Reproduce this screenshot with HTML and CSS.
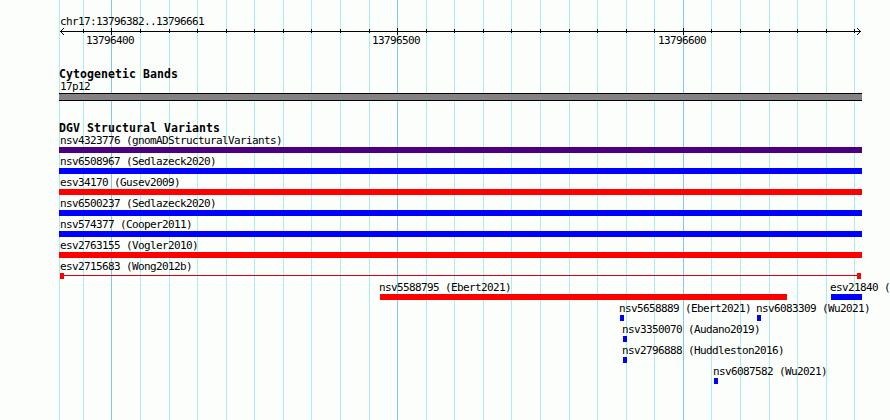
FILE: index.html
```
<!DOCTYPE html>
<html lang="en">
<head>
  <meta charset="UTF-8">
  <title>chr17:13796382..13796661</title>
  <link rel="stylesheet" href="styles.css">
</head>
<body>
  <div class="panel">
    <svg class="grid" width="890" height="420" shape-rendering="crispEdges">
      <path class="minor" d="M59.5 0V420M83.5 0V420M140.5 0V420M169.5 0V420M197.5 0V420M226.5 0V420M254.5 0V420M283.5 0V420M311.5 0V420M340.5 0V420M369.5 0V420M426.5 0V420M454.5 0V420M483.5 0V420M511.5 0V420M540.5 0V420M569.5 0V420M597.5 0V420M626.5 0V420M654.5 0V420M711.5 0V420M740.5 0V420M769.5 0V420M797.5 0V420M826.5 0V420M854.5 0V420"/>
      <path class="major" d="M111.5 0V420M397.5 0V420M683.5 0V420"/>
    </svg>

    <div class="tracks">
      <div class="label region">chr17:13796382..13796661</div>
      <svg class="ruler" width="803" height="7" viewBox="59 28 803 7" shape-rendering="crispEdges">
        <path d="M60 31.5H861"/>
        <path d="M83.5 29V33M140.5 29V33M169.5 29V33M197.5 29V33M226.5 29V33M254.5 29V33M283.5 29V33M311.5 29V33M340.5 29V33M369.5 29V33M426.5 29V33M454.5 29V33M483.5 29V33M511.5 29V33M540.5 29V33M569.5 29V33M597.5 29V33M626.5 29V33M654.5 29V33M711.5 29V33M740.5 29V33M769.5 29V33M797.5 29V33M826.5 29V33M854.5 29V33"/>
        <path d="M111.5 28V35M397.5 28V35M683.5 28V35"/>
        <path d="M61 30.5h1M62 29.5h1M63 28.5h1M61 32.5h1M62 33.5h1M63 34.5h1M859 30.5h1M858 29.5h1M857 28.5h1M859 32.5h1M858 33.5h1M857 34.5h1"/>
      </svg>
      <div class="numbers">
        <span class="label">13796400</span>
        <span class="label">13796500</span>
        <span class="label">13796600</span>
      </div>

      <h2 class="bands-title">Cytogenetic Bands</h2>
      <div class="label band-label">17p12</div>
      <div class="band"></div>

      <h2 class="variants-title">DGV Structural Variants</h2>
      <div class="row"><div class="feature full gain-loss"><span class="label">nsv4323776 (gnomADStructuralVariants)</span></div></div>
      <div class="row"><div class="feature full gain"><span class="label">nsv6508967 (Sedlazeck2020)</span></div></div>
      <div class="row"><div class="feature full loss"><span class="label">esv34170 (Gusev2009)</span></div></div>
      <div class="row"><div class="feature full gain"><span class="label">nsv6500237 (Sedlazeck2020)</span></div></div>
      <div class="row"><div class="feature full gain"><span class="label">nsv574377 (Cooper2011)</span></div></div>
      <div class="row"><div class="feature full loss"><span class="label">esv2763155 (Vogler2010)</span></div></div>
      <div class="row"><div class="feature full ends"><span class="label">esv2715683 (Wong2012b)</span></div></div>
      <div class="row">
        <div class="feature loss" style="margin-left: 321px; width: 407px"><span class="label">nsv5588795 (Ebert2021)</span></div>
        <div class="feature gain" style="margin-left: 44px; width: 31px"><span class="label">esv21840 (</span></div>
      </div>
      <div class="row">
        <div class="feature gain" style="margin-left: 561px; width: 4px"><span class="label">nsv5658889 (Ebert2021)</span></div>
        <div class="feature gain" style="margin-left: 133px; width: 4px"><span class="label">nsv6083309 (Wu2021)</span></div>
      </div>
      <div class="row"><div class="feature gain" style="margin-left: 564px; width: 4px"><span class="label">nsv3350070 (Audano2019)</span></div></div>
      <div class="row"><div class="feature gain" style="margin-left: 564px; width: 4px"><span class="label">nsv2796888 (Huddleston2016)</span></div></div>
      <div class="row"><div class="feature gain" style="margin-left: 655px; width: 4px"><span class="label">nsv6087582 (Wu2021)</span></div></div>
    </div>
  </div>
</body>
</html>
```
FILE: styles.css
```
body {
  margin: 0;
  background: #fcfefc;
}
.panel {
  position: relative;
  width: 890px;
  height: 420px;
  overflow: hidden;
  color: #000;
  font-family: "DejaVu Sans Mono", monospace;
}
.grid {
  position: absolute;
  top: 0;
  left: 0;
}
.minor {
  stroke: #aceeec;
}
.major {
  stroke: #84cae4;
}
.tracks {
  position: relative;
  width: 803px;
  padding: 16px 0 0 59px;
}
.label {
  display: block;
  font-size: 11px;
  line-height: 12px;
  letter-spacing: -0.622px;
  white-space: nowrap;
}
.region {
  height: 12px;
  padding-left: 1px;
}
.ruler {
  display: block;
  stroke: #000;
}
.numbers {
  display: flex;
  gap: 238px;
  height: 33px;
  padding-left: 27px;
}
.numbers .label {
  width: 48px;
  line-height: 11px;
}
h2 {
  margin: 0;
  font-size: 11.5px;
  line-height: 10px;
  letter-spacing: 0.077px;
}
.bands-title {
  height: 12px;
  padding-top: 1px;
}
.band-label {
  height: 12px;
  padding-left: 1px;
}
.band {
  height: 6px;
  border: solid #000;
  border-width: 1px 0;
  background: #848284;
}
.variants-title {
  height: 11px;
  margin-top: 22px;
}
.row {
  display: flex;
  height: 21px;
}
.feature {
  height: 6px;
  padding-top: 13px;
  background-repeat: no-repeat;
  background-position: 0 13px;
  background-size: 100% 6px;
}
.feature .label {
  height: 12px;
  margin: -12px 0 0 -1px;
}
.full {
  width: 803px;
}
.full .label {
  padding-left: 2px;
}
.gain {
  background-image: linear-gradient(#00f, #00f);
}
.loss {
  background-image: linear-gradient(#f00, #f00);
}
.gain-loss {
  background-image: linear-gradient(#4b0082, #4b0082);
}
/* two breakpoints joined by a thin line */
.ends {
  background-image: linear-gradient(#f00, #f00), linear-gradient(#f00, #f00), linear-gradient(#d80010, #d80010);
  background-position: 1px 13px, 798px 13px, 1px 15px;
  background-size: 4px 6px, 4px 6px, 800px 1px;
}
```
